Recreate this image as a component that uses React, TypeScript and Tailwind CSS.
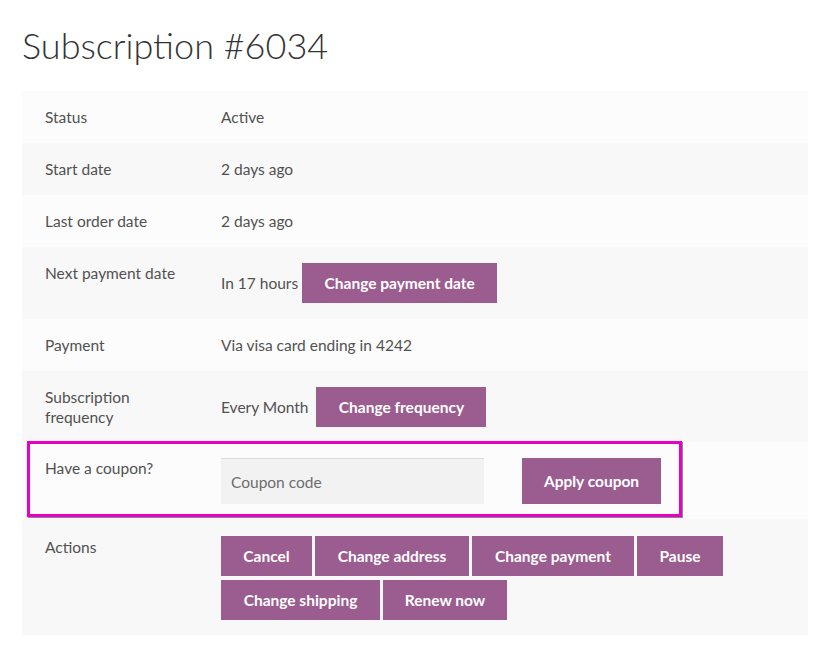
const font = { fontFamily: 'Lato, "Noto Sans", sans-serif' }

function Btn({ label, w, h = 'h-[40px]' }: { label: string; w: string; h?: string }) {
  return (
    <button
      className={`${w} ${h} shrink-0 bg-[#9b5c8f] text-white font-bold text-[15.5px] leading-5 flex items-center justify-center`}
    >
      {label}
    </button>
  )
}

export default function App() {
  return (
    <div className="min-h-[649px] bg-white pl-[22px] pr-[10px] text-[#515151]" style={font}>
      {/* Title */}
      <h1 className="pt-[18px] pb-[18px] text-[36px] leading-[55px] font-light text-[#333]">
        Subscription #6034
      </h1>

      {/* Table */}
      <div className="text-[15.5px] leading-5">
        <div className="flex bg-[#fcfcfc] h-[52px]">
          <div className="w-[199px] pl-[23px] pt-4">Status</div>
          <div className="pt-4">Active</div>
        </div>
        <div className="flex bg-[#f8f8f8] h-[52px]">
          <div className="w-[199px] pl-[23px] pt-4">Start date</div>
          <div className="pt-4">2 days ago</div>
        </div>
        <div className="flex bg-[#fcfcfc] h-[52px]">
          <div className="w-[199px] pl-[23px] pt-4">Last order date</div>
          <div className="pt-4">2 days ago</div>
        </div>
        <div className="flex bg-[#f8f8f8] h-[72px]">
          <div className="w-[199px] pl-[23px] pt-4">Next payment date</div>
          <div className="pt-[16px] flex items-center gap-[4px] h-fit">
            <span>In 17 hours</span>
            <Btn label="Change payment date" w="w-[195px]" />
          </div>
        </div>
        <div className="flex bg-[#fcfcfc] h-[52px]">
          <div className="w-[199px] pl-[23px] pt-4">Payment</div>
          <div className="pt-4">Via visa card ending in 4242</div>
        </div>
        <div className="flex bg-[#f8f8f8] h-[71px]">
          <div className="w-[199px] pl-[23px] pt-4">
            <div className="max-w-[110px]">Subscription frequency</div>
          </div>
          <div className="pt-[16px] flex items-center gap-[8px] h-fit">
            <span>Every Month</span>
            <Btn label="Change frequency" w="w-[170px]" />
          </div>
        </div>

        {/* Coupon */}
        <div className="relative flex bg-[#fcfcfc] h-[77px]">
          <div className="w-[199px] pl-[23px] pt-4">Have a coupon?</div>
          <div className="pt-4 flex">
            <input
              placeholder="Coupon code"
              className="w-[263px] h-[46px] bg-[#f2f2f2] border-t border-[#dcdcdc] px-[10px] text-[15.5px] text-[#515151] placeholder:text-[#6d6d6d] outline-none"
              style={font}
            />
            <div className="ml-[38px]">
              <Btn label="Apply coupon" w="w-[139px]" h="h-[46px]" />
            </div>
          </div>
          <div className="absolute left-[5px] top-[-1px] w-[655px] h-[76px] border-[3px] border-[#e600c8] shadow-[1px_1px_0_#8a8a8a] pointer-events-none" />
        </div>

        {/* Actions */}
        <div className="flex bg-[#f8f8f8] h-[116px]">
          <div className="w-[199px] pl-[23px] pt-[18px] shrink-0">Actions</div>
          <div className="pt-[17px] flex flex-wrap gap-x-[3px] gap-y-[4px] content-start w-[520px]">
            <Btn label="Cancel" w="w-[91px]" />
            <Btn label="Change address" w="w-[154px]" />
            <Btn label="Change payment" w="w-[162px]" />
            <Btn label="Pause" w="w-[86px]" />
            <Btn label="Change shipping" w="w-[159px]" />
            <Btn label="Renew now" w="w-[124px]" />
          </div>
        </div>
      </div>
    </div>
  )
}
